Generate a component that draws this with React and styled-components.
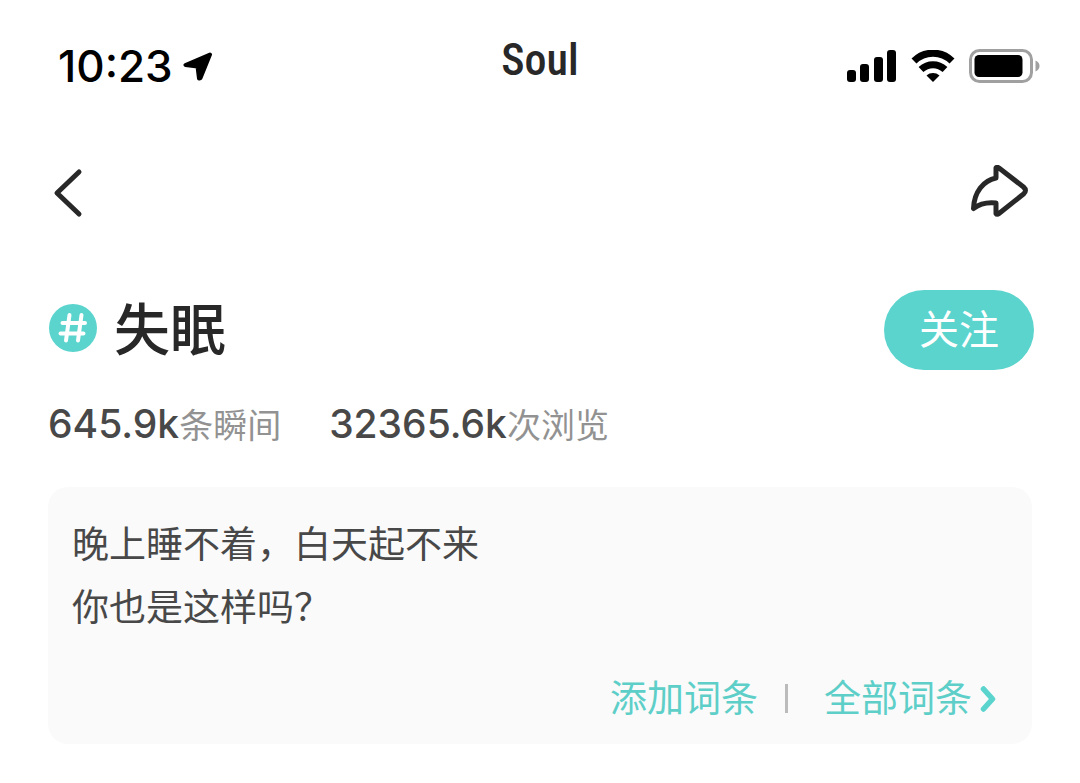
import React from "react";
import styled, { createGlobalStyle } from "styled-components";

const GlobalStyle = createGlobalStyle`
  * { box-sizing: border-box; }
  body {
    margin: 0;
    background: #fff;
    color: #282828;
    font-family: Inter, "Noto Sans CJK SC", sans-serif;
  }
  h1, p { margin: 0; }
  button { border: 0; padding: 0; background: none; color: inherit; font-family: inherit; cursor: pointer; }
  svg { display: block; flex: none; }
`;

const Page = styled.div`
  padding: 24px 48px 40px;
`;

const StatusBar = styled.header`
  display: grid;
  grid-template-columns: 1fr auto 1fr;
  align-items: center;
  height: 80px;
  margin: 0 -8px;
  color: #000;
`;

const Clock = styled.div`
  display: flex;
  align-items: center;
  gap: 10px;
  font-size: 44px;
  font-weight: 500;
  line-height: 56px;
  padding: 4px 0 0 18px;
`;

const Brand = styled.div`
  font-family: "Roboto Condensed", "Liberation Sans Narrow", "DejaVu Sans Condensed", sans-serif;
  font-size: 44px;
  font-weight: 500;
  line-height: 56px;
  padding-bottom: 8px;
  color: #282828;
`;

const Indicators = styled.div`
  display: flex;
  justify-content: flex-end;
  align-items: center;
  gap: 14px;
  padding-top: 4px;
`;

const NavBar = styled.nav`
  display: flex;
  justify-content: space-between;
  align-items: center;
  height: 56px;
  margin-top: 60px;
`;

const IconButton = styled.button`
  display: flex;
`;

const TopicRow = styled.section`
  display: flex;
  align-items: center;
  height: 80px;
  margin-top: 70px;
`;

const TopicTitle = styled.h1`
  flex: 1;
  margin-left: 16px;
  font-size: 56px;
  font-weight: 500;
  line-height: 80px;
`;

const FollowButton = styled.button`
  width: 150px;
  height: 80px;
  margin-right: -2px;
  border-radius: 40px;
  background: #5ad4cd;
  color: #fff;
  font-size: 40px;
  font-weight: 400;
  line-height: 80px;
`;

const Stats = styled.section`
  display: flex;
  gap: 48px;
  height: 56px;
  margin-top: 26px;
`;

const Stat = styled.p`
  display: flex;
  align-items: baseline;
  color: #929292;
  font-size: 34px;
  font-weight: 400;
  line-height: 56px;
`;

const StatValue = styled.span`
  color: #484848;
  font-size: 39px;
  font-weight: 500;
`;

const Card = styled.section`
  margin-top: 35px;
  padding: 26px 36px 14px 24px;
  border-radius: 20px;
  background: #fafafa;
  font-size: 37px;
  line-height: 63px;
`;

const Description = styled.p`
  color: #484848;
`;

const CardLinks = styled.div`
  display: flex;
  justify-content: flex-end;
  align-items: center;
  margin-top: 28px;
`;

const CardLink = styled.a`
  display: flex;
  align-items: center;
  gap: 8px;
  color: #5ecfc8;
  text-decoration: none;
`;

const Divider = styled.span`
  width: 3px;
  height: 29px;
  margin: 0 36px 0 27px;
  background: #bbb;
`;

const LocationArrow = () => (
  <svg width="30" height="30" viewBox="0 0 30 30" aria-hidden="true">
    <path d="M27 3.500 2.500 14 14.500 15.500 16 27.500 17.500 27Z" fill="#000" stroke="#000" strokeWidth="4" strokeLinejoin="round" />
  </svg>
);

const Signal = () => (
  <svg width="50" height="32" viewBox="0 0 50 32" aria-hidden="true">
    <rect x="0" y="20" width="9" height="12" rx="3" />
    <rect x="13" y="14" width="9" height="18" rx="3" />
    <rect x="27" y="7" width="9" height="25" rx="3" />
    <rect x="40" y="0" width="9" height="32" rx="3" />
  </svg>
);

const Wifi = () => (
  <svg width="44" height="32" viewBox="0 0 44 32" aria-hidden="true">
    <g fill="none" stroke="#000" strokeWidth="7">
      <path d="M3 11C13.500 .5 30.500 .5 41 11" />
      <path d="M10 19.500C17 13 27 13 34 19.500" />
    </g>
    <path d="M15.500 25.500c3.700-3.300 9.300-3.300 13 0L22 32Z" />
  </svg>
);

const Battery = () => (
  <svg width="71" height="34" viewBox="0 0 71 34" aria-hidden="true">
    <rect x="1.500" y="1.500" width="61" height="31" rx="9" fill="none" stroke="#a0a0a0" strokeWidth="3" />
    <rect x="5.500" y="6" width="48" height="22" rx="4.500" />
    <path d="M66.500 11.500c2.600 1 4 3 4 5.500s-1.400 4.500-4 5.500Z" fill="#a0a0a0" />
  </svg>
);

const BackIcon = () => (
  <svg width="36" height="52" viewBox="0 0 36 52" aria-hidden="true">
    <path d="M31 6 9 27 31 48" fill="none" stroke="#282828" strokeWidth="5" strokeLinecap="round" strokeLinejoin="round" />
  </svg>
);

const ShareIcon = () => (
  <svg width="62" height="54" viewBox="0 0 62 54" aria-hidden="true">
    <path
      d="M26 3q1-1.500 3 0L53.500 22q4 3.500 0 7L29 48.500q-2 1.500-3 0V38C17 37 10 38.500 3.500 43.500 4 27 13.500 15.500 26 13Z"
      fill="none" stroke="#282828" strokeWidth="5" strokeLinejoin="round"
    />
  </svg>
);

const HashBadge = () => (
  <svg width="50" height="54" viewBox="0 0 50 54" aria-hidden="true">
    <circle cx="25" cy="25" r="24" fill="#5ad4cd" />
    <path d="M21.500 12 18 37.500M33.500 12 30 37.500M14.500 20H37M12.500 30.500H35.500" fill="none" stroke="#fff" strokeWidth="4" strokeLinecap="round" />
  </svg>
);

const Chevron = () => (
  <svg width="16" height="26" viewBox="0 0 16 26" aria-hidden="true">
    <path d="M3.500 3 12.500 13 3.500 23" fill="none" stroke="#5ad4cd" strokeWidth="5.500" strokeLinecap="round" strokeLinejoin="round" />
  </svg>
);

export default function App() {
  return (
    <>
      <GlobalStyle />
      <Page>
        <StatusBar>
          <Clock>
            <span>10:23</span>
            <LocationArrow />
          </Clock>
          <Brand>Soul</Brand>
          <Indicators>
            <Signal />
            <Wifi />
            <Battery />
          </Indicators>
        </StatusBar>
        <NavBar>
          <IconButton type="button" aria-label="返回"><BackIcon /></IconButton>
          <IconButton type="button" aria-label="分享"><ShareIcon /></IconButton>
        </NavBar>
        <main>
          <TopicRow>
            <HashBadge />
            <TopicTitle>失眠</TopicTitle>
            <FollowButton type="button">关注</FollowButton>
          </TopicRow>
          <Stats>
            <Stat><StatValue>645.9k</StatValue>条瞬间</Stat>
            <Stat><StatValue>32365.6k</StatValue>次浏览</Stat>
          </Stats>
          <Card>
            <Description>晚上睡不着，白天起不来<br />你也是这样吗？</Description>
            <CardLinks>
              <CardLink href="#add">添加词条</CardLink>
              <Divider />
              <CardLink href="#all">全部词条<Chevron /></CardLink>
            </CardLinks>
          </Card>
        </main>
      </Page>
    </>
  );
}
